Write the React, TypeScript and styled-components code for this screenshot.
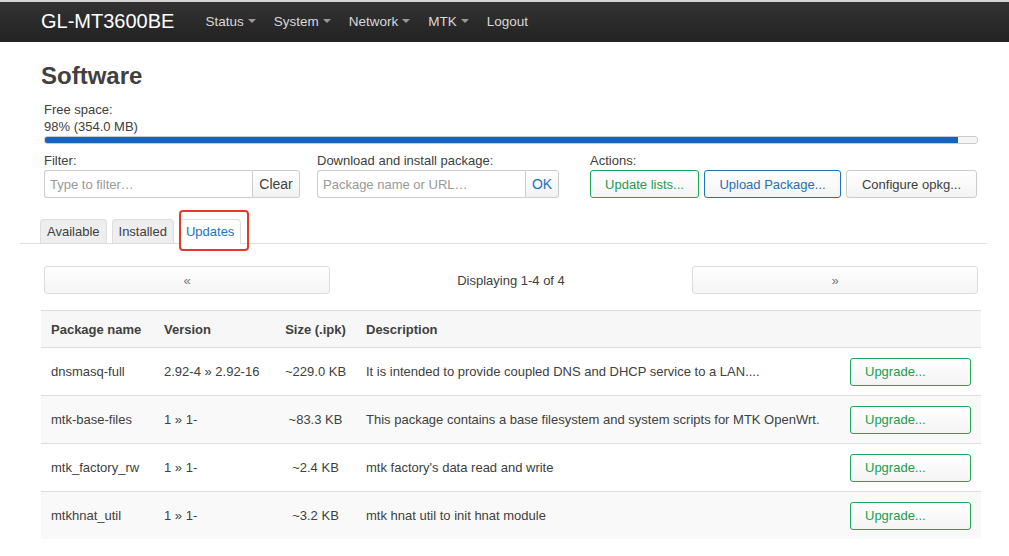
import React from 'react';
import styled, { createGlobalStyle } from 'styled-components';

const GlobalStyle = createGlobalStyle`
	body {
		margin: 0;
		background: #fff;
		font-family: 'Liberation Sans', Arial, sans-serif;
		font-size: 13px;
		color: #404040;
	}
`

const NavBar = styled.div`
	border-top: 2px solid #d4d4d4;
	height: 40px;
	background: linear-gradient(#333, #222);
	display: flex;
	align-items: center;
	padding-left: 41px;
`

const Brand = styled.div`
	color: #fff;
	font-size: 20px;
	margin-right: 31px;
	margin-top: -2px;
`

const NavItem = styled.div<{ $caret?: boolean }>`
	color: #d8d8d8;
	font-size: 13.5px;
	margin-right: ${p => (p.$caret ? '18px' : '0')};
	display: flex;
	align-items: center;
	margin-top: -2px;
	&::after {
		content: '';
		display: ${p => (p.$caret ? 'inline-block' : 'none')};
		margin-left: 4px;
		border-top: 4px solid #999;
		border-left: 4px solid transparent;
		border-right: 4px solid transparent;
	}
`

const Main = styled.div`
	padding: 0 22px 0 20px;
`

const Title = styled.h2`
	margin: 20px 0 0 21px;
	font-size: 24px;
	line-height: 28px;
	font-weight: bold;
	color: #404040;
`

const Controls = styled.div`
	padding: 11px 9px 0 24px;
`

const Line = styled.div`
	line-height: 17px;
`

const Progress = styled.div`
	margin-top: 1px;
	height: 6px;
	border: 1px solid #ccc;
	border-radius: 3px;
	background: #f5f5f5;
	overflow: hidden;
`

const ProgressFill = styled.div`
	height: 100%;
	background: #1565c0;
`

const FieldRow = styled.div`
	display: flex;
	margin-top: 8px;
`

const Field = styled.div<{ $w: number; $mr: number }>`
	width: ${p => p.$w}px;
	margin-right: ${p => p.$mr}px;
	display: flex;
	flex-direction: column;
`

const FieldLabel = styled.div`
	line-height: 17px;
	margin-bottom: 1px;
`

const InputGroup = styled.div`
	display: flex;
	height: 28px;
`

const Input = styled.input`
	width: 208px;
	box-sizing: border-box;
	border: 1px solid #ccc;
	border-right: none;
	border-radius: 3px 0 0 3px;
	padding: 0 5px;
	font-family: 'Liberation Sans', Arial, sans-serif;
	font-size: 13px;
	color: #404040;
	&::placeholder {
		color: #999;
	}
`

const AddonButton = styled.button<{ $blue?: boolean }>`
	box-sizing: border-box;
	flex: 1;
	border: 1px solid #ccc;
	border-radius: 0 3px 3px 0;
	background: linear-gradient(#fff, #f2f2f2);
	font-family: 'Liberation Sans', Arial, sans-serif;
	font-size: 14px;
	color: ${p => (p.$blue ? '#1e73be' : '#404040')};
	padding: 0;
`

const ActionRow = styled.div`
	display: flex;
	gap: 5px;
	height: 28px;
`

const Btn = styled.button<{ $tone: 'green' | 'blue' | 'plain'; $w: number }>`
	box-sizing: border-box;
	width: ${p => p.$w}px;
	height: 28px;
	border-radius: 3px;
	border: 1px solid ${p => (p.$tone === 'green' ? '#1aaa55' : p.$tone === 'blue' ? '#1e73be' : '#ccc')};
	color: ${p => (p.$tone === 'green' ? '#1a9e4f' : p.$tone === 'blue' ? '#1e6fbd' : '#404040')};
	background: linear-gradient(#fff, #f4f4f4);
	font-family: 'Liberation Sans', Arial, sans-serif;
	font-size: 13px;
	padding: 0;
`

const TabBar = styled.div`
	position: relative;
	display: flex;
	gap: 5px;
	margin-top: 21px;
	padding-left: 20px;
	border-bottom: 1px solid #ddd;
`

const Tab = styled.div<{ $active?: boolean }>`
	line-height: 24px;
	padding: 0 6px;
	border: 1px solid #ddd;
	border-bottom: none;
	border-radius: 4px 4px 0 0;
	background: ${p => (p.$active ? '#fff' : '#eee')};
	color: ${p => (p.$active ? '#1e73be' : '#404040')};
	margin-bottom: ${p => (p.$active ? '-1px' : '0')};
	height: ${p => (p.$active ? '24px' : '23px')};
	font-size: 13px;
`

const Highlight = styled.div`
	position: absolute;
	left: 159px;
	top: -9px;
	width: 66px;
	height: 37px;
	border: 2px solid #e2392b;
	border-radius: 4px;
	pointer-events: none;
`

const Pager = styled.div`
	display: grid;
	grid-template-columns: 286px 1fr 286px;
	align-items: center;
	margin: 22px 9px 0 24px;
`

const PageButton = styled.button`
	height: 28px;
	border: 1px solid #ddd;
	border-radius: 3px;
	background: linear-gradient(#fff, #f4f4f4);
	color: #777;
	font-family: 'Liberation Sans', Arial, sans-serif;
	font-size: 13px;
`

const PageInfo = styled.div`
	text-align: center;
	font-size: 13px;
`

const Table = styled.table`
	margin: 16px 6px 0 21px;
	width: calc(100% - 27px);
	border-collapse: collapse;
	table-layout: fixed;
`

const HeadCell = styled.th<{ $w?: number; $center?: boolean }>`
	width: ${p => (p.$w ? `${p.$w}px` : 'auto')};
	text-align: ${p => (p.$center ? 'center' : 'left')};
	height: 36px;
	padding: 0 10px;
	background: #f7f7f7;
	border-top: 1px solid #ddd;
	font-weight: bold;
	font-size: 13px;
`

const Row = styled.tr<{ $odd: boolean }>`
	background: ${p => (p.$odd ? '#f9f9f9' : '#fff')};
`

const Cell = styled.td<{ $center?: boolean }>`
	height: 47px;
	padding: 0 10px;
	border-top: 1px solid #ddd;
	text-align: ${p => (p.$center ? 'center' : 'left')};
	white-space: nowrap;
	overflow: hidden;
`

const UpgradeButton = styled.button`
	box-sizing: border-box;
	width: 121px;
	height: 28px;
	border: 1px solid #1aaa55;
	border-radius: 3px;
	background: linear-gradient(#fff, #f4f4f4);
	color: #1a9e4f;
	font-family: 'Liberation Sans', Arial, sans-serif;
	font-size: 13px;
	text-align: left;
	padding-left: 14px;
`

const packages = [
	{ name: 'dnsmasq-full', version: '2.92-4 » 2.92-16', size: '~229.0 KB', desc: 'It is intended to provide coupled DNS and DHCP service to a LAN....' },
	{ name: 'mtk-base-files', version: '1 » 1-', size: '~83.3 KB', desc: 'This package contains a base filesystem and system scripts for MTK OpenWrt.' },
	{ name: 'mtk_factory_rw', version: '1 » 1-', size: '~2.4 KB', desc: "mtk factory's data read and write" },
	{ name: 'mtkhnat_util', version: '1 » 1-', size: '~3.2 KB', desc: 'mtk hnat util to init hnat module' },
]

export default function App() {
	return (<>
		<GlobalStyle />
		<NavBar>
			<Brand>GL-MT3600BE</Brand>
			<NavItem $caret>Status</NavItem>
			<NavItem $caret>System</NavItem>
			<NavItem $caret>Network</NavItem>
			<NavItem $caret>MTK</NavItem>
			<NavItem>Logout</NavItem>
		</NavBar>
		<Main>
			<Title>Software</Title>
			<Controls>
				<Line>Free space:</Line>
				<Line>98% (354.0 MB)</Line>
				<Progress>
					<ProgressFill style={{ width: '98%' }} />
				</Progress>
				<FieldRow>
					<Field $w={256} $mr={17}>
						<FieldLabel>Filter:</FieldLabel>
						<InputGroup>
							<Input placeholder="Type to filter…" />
							<AddonButton>Clear</AddonButton>
						</InputGroup>
					</Field>
					<Field $w={242} $mr={31}>
						<FieldLabel>Download and install package:</FieldLabel>
						<InputGroup>
							<Input placeholder="Package name or URL…" />
							<AddonButton $blue>OK</AddonButton>
						</InputGroup>
					</Field>
					<Field $w={388} $mr={0}>
						<FieldLabel>Actions:</FieldLabel>
						<ActionRow>
							<Btn $tone="green" $w={109}>Update lists...</Btn>
							<Btn $tone="blue" $w={137}>Upload Package...</Btn>
							<Btn $tone="plain" $w={131}>Configure opkg...</Btn>
						</ActionRow>
					</Field>
				</FieldRow>
			</Controls>
			<TabBar>
				<Tab>Available</Tab>
				<Tab>Installed</Tab>
				<Tab $active>Updates</Tab>
				<Highlight />
			</TabBar>
			<Pager>
				<PageButton>«</PageButton>
				<PageInfo>Displaying 1-4 of 4</PageInfo>
				<PageButton>»</PageButton>
			</Pager>
			<Table>
				<thead>
					<tr>
						<HeadCell $w={93}>Package name</HeadCell>
						<HeadCell $w={101}>Version</HeadCell>
						<HeadCell $w={61} $center>Size (.ipk)</HeadCell>
						<HeadCell>Description</HeadCell>
						<HeadCell $w={121}></HeadCell>
					</tr>
				</thead>
				<tbody>
					{packages.map((p, i) => (
						<Row key={p.name} $odd={i % 2 === 1}>
							<Cell>{p.name}</Cell>
							<Cell>{p.version}</Cell>
							<Cell $center>{p.size}</Cell>
							<Cell>{p.desc}</Cell>
							<Cell><UpgradeButton>Upgrade...</UpgradeButton></Cell>
						</Row>
					))}
				</tbody>
			</Table>
		</Main>
	</>);
}
